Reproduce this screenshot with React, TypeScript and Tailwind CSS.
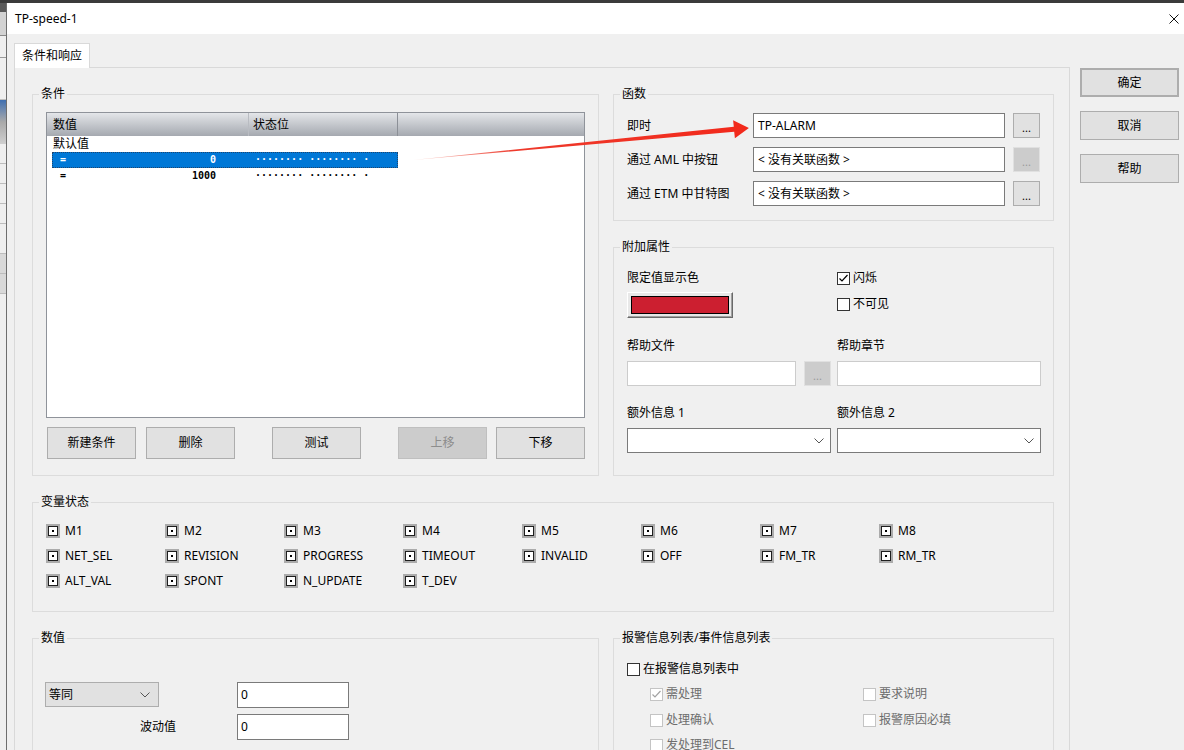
import React from "react";

const FONT = "font-['Noto_Sans','Noto_Sans_CJK_SC',sans-serif]";
const MONO = "font-['DejaVu_Sans_Mono',monospace]";

function Group(props: { title: string; className?: string; children?: React.ReactNode }) {
  return (
    <fieldset className={"min-w-0 border border-[#dcdcdc] " + (props.className ?? "")}>
      <legend className="ml-[6px] px-[2px] leading-[16px]">{props.title}</legend>
      {props.children}
    </fieldset>
  );
}

function Btn(props: { label: string; className?: string; disabled?: boolean }) {
  return (
    <button
      type="button"
      className={
        "flex items-center justify-center border " +
        (props.disabled
          ? "bg-[#cccccc] border-[#bfbfbf] text-[#8d8d8d] "
          : "bg-[#e1e1e1] border-[#adadad] ") +
        (props.className ?? "")
      }
    >
      {props.label}
    </button>
  );
}

function DotsBtn(props: { disabled?: boolean }) {
  return (
    <button
      type="button"
      className={
        "w-[27px] h-full shrink-0 flex items-center justify-center border text-[11px] leading-none pt-[3px] " +
        (props.disabled ? "bg-[#cccccc] border-[#e0e0e0] text-[#9a9a9a]" : "bg-[#e1e1e1] border-[#adadad]")
      }
    >
      ...
    </button>
  );
}

function Check(props: { checked?: boolean; disabled?: boolean }) {
  return (
    <span
      className={
        "w-[13px] h-[13px] shrink-0 border bg-white flex items-center justify-center " +
        (props.disabled ? "border-[#c4c4c4]" : "border-[#333333]")
      }
    >
      {props.checked && (
        <svg width="11" height="11" viewBox="0 0 11 11">
          <path
            d="M1.5 5.5 L4 8 L9.5 2"
            fill="none"
            stroke={props.disabled ? "#a3a3a3" : "#000"}
            strokeWidth="1.2"
          />
        </svg>
      )}
    </span>
  );
}

function StateBox() {
  return (
    <span className="w-[14px] h-[14px] shrink-0 bg-[#ababab] p-[2px] flex">
      <span className="flex-1 border border-[#1e1e1e] bg-white flex items-center justify-center">
        <span className="w-[2px] h-[2px] bg-black" />
      </span>
    </span>
  );
}

const Chevron = () => (
  <svg width="10" height="6" viewBox="0 0 10 6">
    <path d="M0.5 0.5 L5 5 L9.5 0.5" fill="none" stroke="#555" strokeWidth="1" />
  </svg>
);

const states = [
  ["M1", "M2", "M3", "M4", "M5", "M6", "M7", "M8"],
  ["NET_SEL", "REVISION", "PROGRESS", "TIMEOUT", "INVALID", "OFF", "FM_TR", "RM_TR"],
  ["ALT_VAL", "SPONT", "N_UPDATE", "T_DEV"],
];

function ConditionList() {
  return (
    <div className="h-[306px] border border-[#8f939a] bg-white flex flex-col">
      <div className="h-[23px] shrink-0 flex bg-linear-to-b from-[#e4e6e9] to-[#a5a9b0]">
        <div className="w-[202px] pl-[6px] flex items-center border-r border-[#b9bcc2]">数值</div>
        <div className="w-[149px] pl-[4px] flex items-center border-r border-[#8c9097]">状态位</div>
        <div className="flex-1" />
      </div>
      <div className="h-[16px] pl-[6px] flex items-center">默认值</div>
      <div
        className={
          "ml-[5px] w-[346px] h-[16px] flex items-center bg-[#0078d7] text-white text-[10px] font-bold outline-1 outline-dotted outline-[#20456e] -outline-offset-1 " +
          MONO
        }
      >
        <div className="w-[164px] pl-[8px] flex justify-between">
          <span>=</span>
          <span>0</span>
        </div>
        <span className="ml-[39px] whitespace-pre">········ ········ ·</span>
      </div>
      <div className={"ml-[5px] w-[346px] h-[16px] flex items-center text-[10px] font-bold " + MONO}>
        <div className="w-[164px] pl-[8px] flex justify-between">
          <span>=</span>
          <span>1000</span>
        </div>
        <span className="ml-[39px] whitespace-pre">········ ········ ·</span>
      </div>
    </div>
  );
}

function FuncRow(props: { label: string; value: string; disabled?: boolean }) {
  return (
    <div className="h-[25px] flex items-center">
      <div className="w-[126px]">{props.label}</div>
      <div className="w-[252px] h-full border border-[#7a7a7a] bg-white px-[4px] flex items-center">
        {props.value}
      </div>
      <div className="ml-[8px] h-full flex">
        <DotsBtn disabled={props.disabled} />
      </div>
    </div>
  );
}

function LeftStrip() {
  return (
    <div className="w-[7px] shrink-0 border-r border-[#6e6e6e] bg-[#efefef] flex flex-col">
      <div className="h-[9px] bg-[#5a5a5a]" />
      <div className="h-[24px] bg-[#d3d3d3] border-b border-[#8a8a8a]" />
      <div className="h-[22px] border-b border-[#9a9a9a]" />
      <div className="h-[42px] border-b border-[#c0c0c0]" />
      <div className="h-[44px] bg-linear-to-b from-[#3f6fb0] via-[#a9a9a9] to-[#cfcfcf]" />
      <div className="h-[20px] border-b border-[#bdbdbd]" />
      <div className="h-[20px] border-b border-[#bdbdbd]" />
      <div className="h-[20px] border-b border-[#bdbdbd]" />
      <div className="h-[20px] border-b border-[#bdbdbd]" />
      <div className="h-[30px] border-b border-[#bdbdbd]" />
      <div className="h-[20px] bg-[#d9d9d9] border-b border-[#bdbdbd]" />
      <div className="h-[20px] bg-[#d9d9d9] border-b border-[#bdbdbd]" />
      <div className="flex-1" />
    </div>
  );
}

export default function App() {
  return (
    <div
      className={
        "relative w-[1184px] h-[750px] overflow-hidden bg-[#f0f0f0] text-[12px] leading-[16px] text-black flex flex-col " +
        FONT
      }
    >
      <div className="h-[3px] shrink-0 bg-[#3b3b3b]" />
      <div className="flex flex-1 min-h-0">
        <LeftStrip />
        <div className="flex-1 min-w-0 flex flex-col">
          {/* title bar */}
          <div className="h-[31px] shrink-0 bg-white flex items-center justify-between pl-[8px] pr-[5px]">
            <span>TP-speed-1</span>
            <svg width="10" height="10" viewBox="0 0 10 10">
              <path d="M0.5 0.5 L9.5 9.5 M9.5 0.5 L0.5 9.5" stroke="#111" strokeWidth="1" />
            </svg>
          </div>

          {/* body */}
          <div className="flex flex-1 min-h-0 pl-[7px] pt-[9px]">
            <div className="w-[1056px] shrink-0 flex flex-col">
              <div className="relative z-10 shrink-0 w-[76px] h-[25px] bg-white border border-b-0 border-[#d9d9d9] pl-[7px] flex items-center">
                条件和响应
              </div>
              <div className="-mt-px shrink-0 border border-[#d9d9d9] pt-[18px] pb-[20px] pl-[17px] pr-[15px] flex flex-col gap-[18px]">
                {/* row 1 */}
                <div className="shrink-0 grid grid-cols-[567px_441px] gap-x-[14px]">
                  <Group title="条件" className="h-[390px]">
                    <div className="px-[13px] pt-[10px]">
                      <ConditionList />
                      <div className="mt-[9px] h-[32px] flex">
                        <Btn label="新建条件" className="ml-[1px] w-[89px]" />
                        <Btn label="删除" className="ml-[10px] w-[89px]" />
                        <Btn label="测试" className="ml-[37px] w-[89px]" />
                        <Btn label="上移" disabled className="ml-[37px] w-[89px]" />
                        <Btn label="下移" className="ml-[9px] w-[89px]" />
                      </div>
                    </div>
                  </Group>

                  <div className="flex flex-col gap-[18px]">
                    <Group title="函数" className="h-[135px] shrink-0">
                      <div className="px-[13px] pt-[11px] flex flex-col gap-[9px]">
                        <FuncRow label="即时" value="TP-ALARM" />
                        <FuncRow label="通过 AML 中按钮" value="< 没有关联函数 >" disabled />
                        <FuncRow label="通过 ETM 中甘特图" value="< 没有关联函数 >" />
                      </div>
                    </Group>

                    <Group title="附加属性" className="flex-1">
                      <div className="px-[13px] pt-[15px]">
                        <div className="grid grid-cols-[204px_204px] gap-x-[6px]">
                          <div>
                            <div className="h-[16px]">限定值显示色</div>
                            <div className="mt-[6px] w-[106px] h-[26px] p-[3px] bg-[#e8e8e8] border border-t-white border-l-white border-r-[#696969] border-b-[#696969] shadow-[inset_-1px_-1px_0_#a0a0a0]">
                              <div className="h-full border border-black bg-[#cc1f30]" />
                            </div>
                          </div>
                          <div>
                            <div className="h-[16px] flex items-center gap-[3px]">
                              <Check checked />
                              <span>闪烁</span>
                            </div>
                            <div className="mt-[10px] h-[16px] flex items-center gap-[3px]">
                              <Check />
                              <span>不可见</span>
                            </div>
                          </div>
                        </div>

                        <div className="mt-[20px] grid grid-cols-[204px_204px] gap-x-[6px]">
                          <div>
                            <div className="h-[16px]">帮助文件</div>
                            <div className="mt-[7px] h-[25px] flex gap-[8px]">
                              <div className="flex-1 border border-[#cccccc] bg-white" />
                              <DotsBtn disabled />
                            </div>
                          </div>
                          <div>
                            <div className="h-[16px]">帮助章节</div>
                            <div className="mt-[7px] h-[25px] border border-[#cccccc] bg-white" />
                          </div>
                        </div>

                        <div className="mt-[19px] grid grid-cols-[204px_204px] gap-x-[6px]">
                          <div>
                            <div className="h-[16px]">额外信息 1</div>
                            <div className="mt-[7px] h-[25px] border border-[#7a7a7a] bg-white flex items-center justify-end pr-[6px]">
                              <Chevron />
                            </div>
                          </div>
                          <div>
                            <div className="h-[16px]">额外信息 2</div>
                            <div className="mt-[7px] h-[25px] border border-[#7a7a7a] bg-white flex items-center justify-end pr-[6px]">
                              <Chevron />
                            </div>
                          </div>
                        </div>
                      </div>
                    </Group>
                  </div>
                </div>

                {/* row 2 */}
                <Group title="变量状态" className="h-[118px] shrink-0">
                  <div className="pl-[13px] pt-[8px] grid grid-cols-[repeat(8,119px)] auto-rows-[25px]">
                    {states.flat().map((s) => (
                      <div key={s} className="flex items-center gap-[5px]">
                        <StateBox />
                        <span>{s}</span>
                      </div>
                    ))}
                  </div>
                </Group>

                {/* row 3 */}
                <div className="shrink-0 grid grid-cols-[567px_441px] gap-x-[14px]">
                  <Group title="数值" className="h-[140px]">
                    <div className="pl-[12px] pt-[36px]">
                      <div className="flex">
                        <div className="w-[114px] h-[25px] bg-[#e1e1e1] border border-[#adadad] pl-[3px] pr-[8px] flex items-center justify-between">
                          <span>等同</span>
                          <Chevron />
                        </div>
                        <div className="ml-[78px] w-[112px] h-[26px] border border-[#7a7a7a] bg-white pl-[3px] flex items-center">
                          0
                        </div>
                      </div>
                      <div className="mt-[6px] flex items-center">
                        <div className="pl-[95px] w-[192px]">波动值</div>
                        <div className="w-[112px] h-[26px] border border-[#7a7a7a] bg-white pl-[3px] flex items-center">
                          0
                        </div>
                      </div>
                    </div>
                  </Group>

                  <Group title="报警信息列表/事件信息列表" className="h-[140px]">
                    <div className="pl-[13px] pt-[15px]">
                      <div className="h-[16px] flex items-center gap-[3px]">
                        <Check />
                        <span>在报警信息列表中</span>
                      </div>
                      <div className="mt-[9px] pl-[23px] grid grid-cols-[213px_auto] auto-rows-[16px] gap-y-[10px] text-[#6d6d6d]">
                        <div className="flex items-center gap-[3px]">
                          <Check checked disabled />
                          <span>需处理</span>
                        </div>
                        <div className="flex items-center gap-[3px]">
                          <Check disabled />
                          <span>要求说明</span>
                        </div>
                        <div className="flex items-center gap-[3px]">
                          <Check disabled />
                          <span>处理确认</span>
                        </div>
                        <div className="flex items-center gap-[3px]">
                          <Check disabled />
                          <span>报警原因必填</span>
                        </div>
                        <div className="flex items-center gap-[3px] -mt-[2px]">
                          <Check disabled />
                          <span>发处理到CEL</span>
                        </div>
                      </div>
                    </div>
                  </Group>
                </div>
              </div>
            </div>

            {/* dialog buttons */}
            <div className="ml-[10px] pt-[25px] flex flex-col gap-[14px]">
              <Btn label="确定" className="w-[99px] h-[29px] border-2 border-[#0078d7]" />
              <Btn label="取消" className="w-[99px] h-[29px]" />
              <Btn label="帮助" className="w-[99px] h-[29px]" />
            </div>
          </div>
        </div>
      </div>

      {/* red annotation arrow */}
      <svg className="absolute left-0 top-0 pointer-events-none" width="1184" height="750">
        <defs>
          <linearGradient id="ag" x1="413" y1="160" x2="750" y2="127" gradientUnits="userSpaceOnUse">
            <stop offset="0" stopColor="#f3a59c" stopOpacity="0.6" />
            <stop offset="0.3" stopColor="#ee3a2c" />
            <stop offset="1" stopColor="#f2291b" />
          </linearGradient>
        </defs>
        <polygon
          points="413,160 733.8,126.8 733.1,120.3 748.9,127.9 734.9,138.3 734.2,131.8"
          fill="url(#ag)"
        />
      </svg>
    </div>
  );
}
